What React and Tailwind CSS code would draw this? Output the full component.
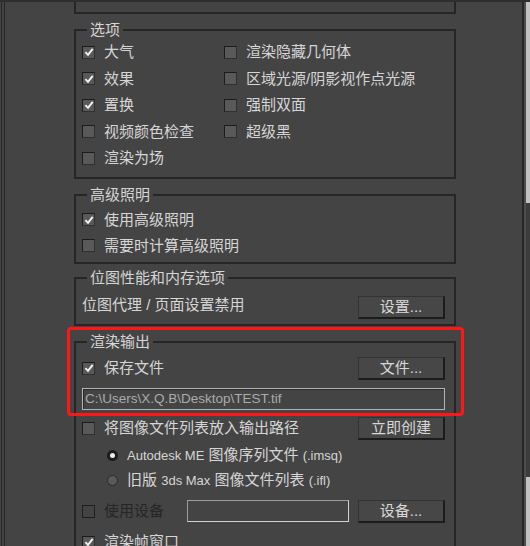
const font = "font-['Liberation_Sans','Noto_Sans_CJK_SC',sans-serif]";

const Check = ({ checked, disabled }) => (
  <span
    className={
      disabled
        ? "w-[13px] h-[13px] shrink-0 border border-[#1e1e1e] bg-transparent"
        : "w-[13px] h-[13px] shrink-0 flex items-center justify-center border border-[#1c1c1c] border-b-[#303030] border-r-[#303030] bg-[#595959]"
    }
  >
    {checked && (
      <svg width="10" height="10" viewBox="0 0 10 10">
        <path d="M1.4 5.2 L4 7.9 L8.7 1.8" stroke="#f4f4f4" strokeWidth="1.9" fill="none" />
      </svg>
    )}
  </span>
);

const Radio = ({ on }) => (
  <span
    className={
      on
        ? "w-[11px] h-[11px] shrink-0 rounded-full bg-[#1c1c1c] flex items-center justify-center"
        : "w-[11px] h-[11px] shrink-0 rounded-full border border-[#2a2a2a] bg-[#5a5a5a]"
    }
  >
    {on && <span className="w-[5px] h-[5px] rounded-full bg-[#ececec]" />}
  </span>
);

const Option = ({ label, checked, disabled, className = "" }) => (
  <div className={`flex items-center gap-[9px] ${className}`}>
    <Check checked={checked} disabled={disabled} />
    <span className={disabled ? "text-[#262626]" : ""}>{label}</span>
  </div>
);

const Button = ({ children }) => (
  <button className="w-[87px] h-[23px] shrink-0 bg-[#474747] border border-[#333] border-b-2 border-r-2 border-b-[#1c1c1c] border-r-[#1c1c1c] text-[#d8d8d8] leading-[18px] flex items-center justify-center">
    {children}
  </button>
);

const Group = ({ title, className = "", children }) => (
  <fieldset className={`border-2 border-[#262626] pl-[6px] pr-[9px] ${className}`}>
    <legend className="ml-[5px] px-[3px] leading-[18px]">{title}</legend>
    {children}
  </fieldset>
);

const options = [
  ["大气", true],
  ["渲染隐藏几何体", false],
  ["效果", true],
  ["区域光源/阴影视作点光源", false],
  ["置换", true],
  ["强制双面", false],
  ["视频颜色检查", false],
  ["超级黑", false],
  ["渲染为场", false],
];

export default function App() {
  return (
    <div className={`w-[530px] h-[546px] overflow-hidden bg-[#444444] text-[15px] leading-[18px] text-[#d6d6d6] relative flex flex-col ${font}`}>
      <div className="h-[2px] bg-[#2e2e2e] shrink-0" />
      <div className="flex flex-1 min-h-0">
        <div className="w-[74px] shrink-0 flex pl-px gap-[2px]">
          <div className="w-px bg-[#262626]" />
          <div className="w-px bg-[#262626]" />
        </div>

        <div className="w-[382px] shrink-0 flex flex-col">
          <div className="h-[12px] shrink-0 border-2 border-t-0 border-[#262626]" />

          <Group title="选项" className="mt-[7px] pb-[5px]">
            <div className="grid grid-cols-[142px_1fr] auto-rows-[26.5px]">
              {options.map(([label, checked]) => (
                <Option key={label} label={label} checked={checked} />
              ))}
            </div>
          </Group>

          <Group title="高级照明" className="mt-[7px] pt-[3px] pb-[3px]">
            <Option label="使用高级照明" checked className="h-[26px]" />
            <Option label="需要时计算高级照明" className="h-[26px]" />
          </Group>

          <Group title="位图性能和内存选项" className="mt-[5px] pt-[8px] pb-[4px]">
            <div className="flex items-center justify-between h-[25px]">
              <span className="pb-[4px]">位图代理 / 页面设置禁用</span>
              <Button>设置...</Button>
            </div>
          </Group>

          <Group title="渲染输出" className="mt-[7px] pt-[6px] pb-[6px]">
            <div className="flex items-center justify-between h-[23px]">
              <Option label="保存文件" checked />
              <Button>文件...</Button>
            </div>
            <div className="mt-[8px] h-[22px] border border-[#b4b4b4] shadow-[inset_1px_1px_0_#2a2a2a] flex items-center pl-[2px] text-[13.5px] text-[#ababab] font-['Liberation_Sans',sans-serif]">
              C:\Users\X.Q.B\Desktop\TEST.tif
            </div>
            <div className="mt-[7px] flex items-center justify-between h-[23px]">
              <Option label="将图像文件列表放入输出路径" />
              <Button>立即创建</Button>
            </div>
            <div className="mt-[3px] flex flex-col pl-[25px]">
              <div className="h-[25px] flex items-center gap-[9px]">
                <Radio on />
                <span>
                  <span className="text-[13px]">Autodesk ME</span> 图像序列文件 <span className="text-[13px]">(.imsq)</span>
                </span>
              </div>
              <div className="h-[25px] flex items-center gap-[9px]">
                <Radio />
                <span>
                  旧版 <span className="text-[13px]">3ds Max</span> 图像文件列表 <span className="text-[13px]">(.ifl)</span>
                </span>
              </div>
            </div>
            <div className="mt-[7px] flex items-center h-[23px]">
              <Option label="使用设备" disabled className="w-[105px]" />
              <div className="w-[162px] h-[22px] border border-[#d2d2d2] border-t-[#9c9c9c] border-l-[#9c9c9c]" />
              <div className="ml-auto">
                <Button>设备...</Button>
              </div>
            </div>
            <Option label="渲染帧窗口" checked className="mt-[8px] h-[23px]" />
          </Group>
        </div>

        <div className="flex-1" />
        <div className="w-[2px] bg-[#262626]" />
        <div className="w-[2px] bg-[#4e4e4e]" />
        <div className="w-[4px] flex flex-col">
          <div className="h-[201px] bg-[#c2c2c2]" />
          <div className="h-[274px] bg-[#3c3c3c]" />
          <div className="flex-1 bg-[#c2c2c2]" />
        </div>
      </div>

      <div className="absolute left-[67px] top-[327px] w-[397px] h-[89px] border-[3px] border-[#ff1717] rounded-[4px]" />
    </div>
  );
}
